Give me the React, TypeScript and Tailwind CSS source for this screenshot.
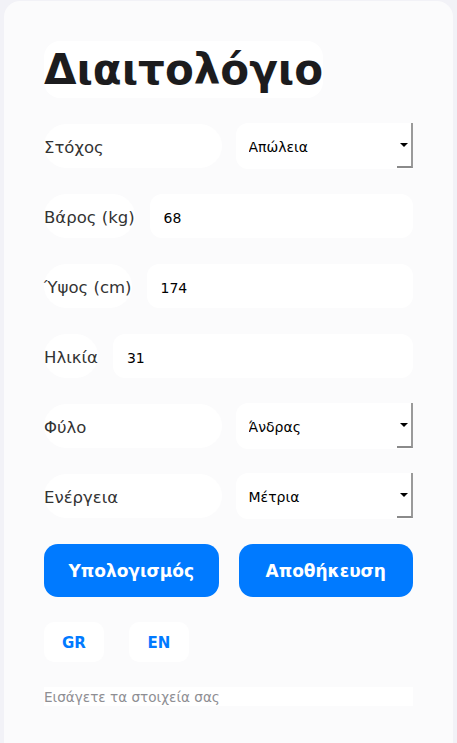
import { useState } from 'react';

const font = { fontFamily: '"DejaVu Sans", Verdana, sans-serif' };

function SelectRow({ label, value, options }: { label: string; value: string; options: string[] }) {
    const [v, setV] = useState(value);
    return (
        <div className="flex h-[44px] items-center gap-[14px]">
            <div className="flex h-full min-w-0 flex-1 items-center rounded-[22px] bg-white pt-[5px] text-[16.5px] text-[#333]">
                {label}
            </div>
            {/* native-looking select with the old dropdown button */}
            <div className="relative h-[46px] min-w-0 flex-1">
                <select
                    value={v}
                    onChange={(e) => setV(e.target.value)}
                    className="h-full w-full appearance-none rounded-l-xl bg-white pt-[2px] pl-[13px] text-[14px] text-black outline-none"
                >
                    {options.map((o) => (
                        <option key={o}>{o}</option>
                    ))}
                </select>
                <span className="pointer-events-none absolute top-0 right-0 bottom-[1px] flex w-[16px] items-center justify-center border-r-2 border-b-2 border-r-[#9a9a9a] border-b-[#8a8a8a]">
                    <span className="mt-[1px] h-0 w-0 border-t-[4px] border-r-[4px] border-l-[4px] border-t-black border-r-transparent border-l-transparent" />
                </span>
            </div>
        </div>
    );
}

function InputRow({ label, value }: { label: string; value: string }) {
    const [v, setV] = useState(value);
    return (
        <div className="flex h-[44px] items-center gap-[15px]">
            <div className="flex h-full items-center rounded-[22px] bg-white pt-[5px] text-[16.5px] text-[#333]">
                {label}
            </div>
            <input
                value={v}
                onChange={(e) => setV(e.target.value)}
                className="h-full min-w-0 flex-1 rounded-xl bg-white px-[14px] pt-[4px] text-[14px] text-black outline-none"
            />
        </div>
    );
}

export default function App() {
    return (
        <div className="min-h-[743px] bg-[#f2f2f7] px-[4px] pt-[1px]" style={font}>
            <div className="min-h-[742px] rounded-t-[16px] bg-[#fbfbfc] p-[40px]">
                {/* Title */}
                <h1 className="inline-block rounded-2xl bg-white text-[42px] leading-[57px] font-bold text-[#1c1c1e]">
                    Διαιτολόγιο
                </h1>

                {/* Form */}
                <div className="mt-[26px] flex flex-col gap-[26px]">
                    <SelectRow label="Στόχος" value="Απώλεια" options={['Απώλεια', 'Διατήρηση', 'Αύξηση']} />
                    <InputRow label="Βάρος (kg)" value="68" />
                    <InputRow label="Ύψος (cm)" value="174" />
                    <InputRow label="Ηλικία" value="31" />
                    <SelectRow label="Φύλο" value="Άνδρας" options={['Άνδρας', 'Γυναίκα']} />
                    <SelectRow label="Ενέργεια" value="Μέτρια" options={['Χαμηλή', 'Μέτρια', 'Υψηλή']} />
                </div>

                {/* Actions */}
                <div className="mt-[26px] flex gap-[20px]">
                    <button className="h-[53px] flex-1 rounded-[14px] bg-[#007aff] pt-[2px] text-[17px] font-bold text-white">
                        Υπολογισμός
                    </button>
                    <button className="h-[53px] flex-1 rounded-[14px] bg-[#007aff] pt-[2px] text-[17px] font-bold text-white">
                        Αποθήκευση
                    </button>
                </div>

                <div className="mt-[25px] flex gap-[25px]">
                    <button className="h-[40px] w-[60px] rounded-[10px] bg-white pt-[2px] text-[15px] font-bold text-[#007aff]">
                        GR
                    </button>
                    <button className="h-[40px] w-[60px] rounded-[10px] bg-white pt-[2px] text-[15px] font-bold text-[#007aff]">
                        EN
                    </button>
                </div>

                <div className="mt-[25px] bg-white pt-[1px] text-[13.6px] leading-[18px] text-[#8e8e93]">
                    Εισάγετε τα στοιχεία σας
                </div>
            </div>
        </div>
    );
}
